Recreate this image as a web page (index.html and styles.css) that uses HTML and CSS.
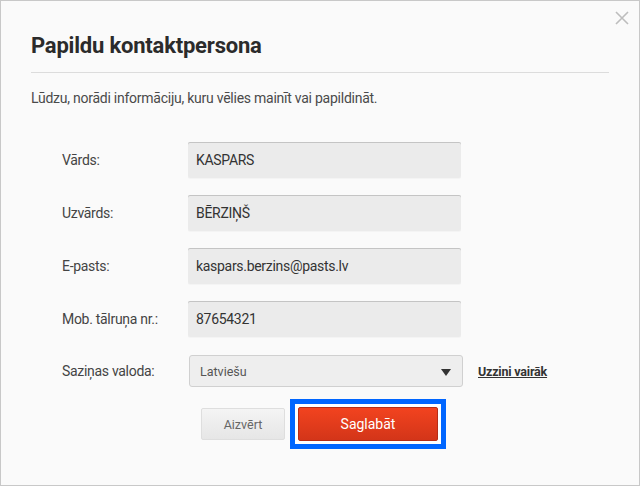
FILE: index.html
```html
<!DOCTYPE html>
<html lang="lv">
<head>
<meta charset="utf-8">
<title>Papildu kontaktpersona</title>
<link rel="stylesheet" href="styles.css">
</head>
<body>
<div class="modal">
  <button class="close" aria-label="Aizvērt">
    <svg width="14" height="14" viewBox="0 0 14 14"><path d="M1 1L13 13M13 1L1 13" stroke="#bdbdbd" stroke-width="1.6" fill="none"/></svg>
  </button>
  <h1 class="title">Papildu kontaktpersona</h1>
  <p class="intro">Lūdzu, norādi informāciju, kuru vēlies mainīt vai papildināt.</p>
  <form class="form">
    <div class="row">
      <label class="label">Vārds:</label>
      <div class="input">KASPARS</div>
    </div>
    <div class="row">
      <label class="label">Uzvārds:</label>
      <div class="input">BĒRZIŅŠ</div>
    </div>
    <div class="row">
      <label class="label">E-pasts:</label>
      <div class="input">kaspars.berzins@pasts.lv</div>
    </div>
    <div class="row">
      <label class="label">Mob. tālruņa nr.:</label>
      <div class="input">87654321</div>
    </div>
    <div class="row row-select">
      <label class="label">Saziņas valoda:</label>
      <div class="select"><span>Latviešu</span><span class="arrow"></span></div>
      <a class="more" href="#">Uzzini vairāk</a>
    </div>
    <div class="actions">
      <button type="button" class="btn btn-close">Aizvērt</button>
      <span class="focus-ring"><button type="button" class="btn btn-save">Saglabāt</button></span>
    </div>
  </form>
</div>
</body>
</html>
```
FILE: styles.css
```css
* { box-sizing: border-box; }
html, body { margin: 0; padding: 0; }
body {
  font-family: Roboto, "Liberation Sans", sans-serif;
  color: #444;
  background: #fafafa;
}
.modal {
  position: relative;
  width: 640px;
  height: 486px;
  border: 1px solid #c8c8c8;
  background: #fafafa;
  padding: 0 30px;
}
.close {
  position: absolute;
  top: 10px;
  right: 10px;
  border: 0;
  background: none;
  padding: 0;
  width: 14px;
  height: 14px;
  cursor: pointer;
}
.close svg { display: block; }
.title {
  margin: 0;
  padding: 33px 0 14px;
  font-size: 22px;
  line-height: 24px;
  font-weight: 700;
  color: #2b2b2b;
  letter-spacing: -0.2px;
  border-bottom: 1px solid #dcdcdc;
}
.intro {
  margin: 16px 0 0;
  font-size: 14px;
  line-height: 18px;
  color: #4a4a4a;
  letter-spacing: -0.25px;
}
.form {
  margin-top: 35px;
  display: flex;
  flex-direction: column;
  gap: 17px;
}
.row {
  display: flex;
  align-items: center;
}
.label {
  width: 157px;
  padding-left: 31px;
  font-size: 14px;
  color: #444;
  letter-spacing: -0.3px;
}
.input {
  width: 273px;
  height: 36px;
  background: #ebebeb;
  border-radius: 2px;
  box-shadow: inset 0 1px 0 #c4c4c4, 0 1px 0 #f4f4f4;
  padding: 0 8px;
  display: flex;
  align-items: center;
  font-size: 14px;
  color: #333;
  letter-spacing: -0.3px;
}
.row-select { margin-top: 1px; }
.select {
  margin-left: 1px;
  width: 274px;
  height: 32px;
  border: 1px solid #d0d0d0;
  border-radius: 3px;
  background: #eeeeee;
  display: flex;
  align-items: center;
  justify-content: space-between;
  padding: 0 11px 0 10px;
  font-size: 12.5px;
  color: #555;
}
.arrow {
  width: 0;
  height: 0;
  border-left: 5px solid transparent;
  border-right: 5px solid transparent;
  border-top: 7px solid #333;
  margin-top: 2px;
}
.more {
  margin-left: 15px;
  font-size: 12.5px;
  font-weight: 700;
  color: #333;
  text-decoration: underline;
  letter-spacing: -0.2px;
}
.actions {
  display: flex;
  align-items: center;
  gap: 5px;
  padding-left: 170px;
  margin-top: -5px;
}
.btn {
  font-family: Roboto, "Liberation Sans", sans-serif;
  border-radius: 2px;
  cursor: pointer;
}
.btn-close {
  width: 84px;
  height: 32px;
  border: 1px solid #dedede;
  background: linear-gradient(#f4f4f4, #e6e6e6);
  color: #666;
  font-size: 12.5px;
}
.focus-ring {
  display: flex;
  border: 5px solid #0066ff;
  background: #ffffff;
  padding: 3px;
}
.btn-save {
  display: block;
  width: 140px;
  height: 34px;
  border: 1px solid #b52d17;
  background: linear-gradient(#f2431f, #d33519);
  color: #fff;
  font-size: 14px;
}
```
